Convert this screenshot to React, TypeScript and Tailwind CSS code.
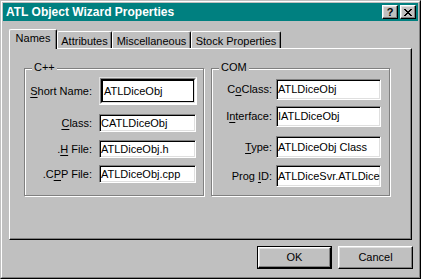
import React from 'react';

// Win95 style 3D edges
const raised =
  'border border-t-white border-l-white border-r-black border-b-black shadow-[inset_-1px_-1px_0_#808080,inset_1px_1px_0_#dfdfdf]';
const sunken =
  'border border-t-[#808080] border-l-[#808080] border-r-white border-b-white shadow-[inset_1px_1px_0_#000,inset_-1px_-1px_0_#dfdfdf]';

const Key: React.FC<{ children: React.ReactNode }> = ({ children }) => (
  <span className="underline underline-offset-[2px] decoration-1">{children}</span>
);

const CloseGlyph = () => {
  const rows = ['##....##', '.##..##.', '..####..', '...##...', '..####..', '.##..##.', '##....##'];
  return (
    <svg width="8" height="7" viewBox="0 0 8 7" shapeRendering="crispEdges">
      {rows.map((r, y) =>
        r.split('').map((c, x) => (c === '#' ? <rect key={`${x}-${y}`} x={x} y={y} width="1" height="1" fill="#000" /> : null))
      )}
    </svg>
  );
};

const Field: React.FC<{ value: string; w: string; h: string; mt: string; label: React.ReactNode; labelW: string; gap: string }> = ({
  value,
  w,
  h,
  mt,
  label,
  labelW,
  gap,
}) => (
  <div className={`flex items-center ${mt} ${gap}`}>
    <div className={`${labelW} text-right leading-none`}>{label}</div>
    <div className={`${w} ${h} bg-white ${sunken} flex items-center pl-[1px] overflow-hidden whitespace-nowrap leading-none`}>
      {value}
    </div>
  </div>
);

const Tab: React.FC<{ label: string; w: string; selected?: boolean }> = ({ label, w, selected }) =>
  selected ? (
    <div
      className={`${w} h-[20px] -mb-px bg-[#c0c0c0] border-l border-t border-r border-l-white border-t-white border-r-black rounded-t-[2px] shadow-[inset_-1px_0_0_#808080] flex items-start justify-center pt-[3px] leading-none`}
    >
      {label}
    </div>
  ) : (
    <div
      className={`${w} h-[17px] bg-[#c0c0c0] border-l border-t border-r border-l-white border-t-white border-r-black rounded-t-[2px] shadow-[inset_-1px_0_0_#808080] flex items-start justify-center pt-[4px] leading-none`}
    >
      {label}
    </div>
  );

export default function App() {
  return (
    <div className="w-[421px] h-[279px] bg-[#c0c0c0] border border-t-[#c0c0c0] border-l-[#c0c0c0] border-r-black border-b-black font-['Liberation_Sans',Arial,sans-serif] text-[11px] text-black">
      <div className="h-full border border-t-white border-l-white border-r-[#808080] border-b-[#808080] p-px flex flex-col">
        {/* Title bar */}
        <div className="h-[18px] bg-[#008080] flex items-center pl-[3px] pr-[2px]">
          <span className="text-white font-bold text-[12px] leading-none flex-1">ATL Object Wizard Properties</span>
          <div className="flex gap-[2px]">
            <div className={`w-[16px] h-[14px] bg-[#c0c0c0] ${raised} flex items-center justify-center font-bold text-[11px] leading-none`}>
              ?
            </div>
            <div className={`w-[16px] h-[14px] bg-[#c0c0c0] ${raised} flex items-center justify-center`}>
              <CloseGlyph />
            </div>
          </div>
        </div>

        {/* Tabs */}
        <div className="ml-[6px] mt-[8px] flex items-end h-[19px] relative z-10">
          <Tab label="Names" w="w-[48px]" selected />
          <Tab label="Attributes" w="w-[55px]" />
          <Tab label="Miscellaneous" w="w-[79px]" />
          <Tab label="Stock Properties" w="w-[90px]" />
        </div>

        {/* Page */}
        <div className="ml-[6px] w-[403px] h-[192px] border border-t-white border-l-white border-r-black border-b-black shadow-[inset_-1px_-1px_0_#808080] flex gap-[7px] pl-[14px] pt-[19px]">
          {/* C++ group */}
          <div className="relative w-[180px] h-[128px] border border-[#808080] shadow-[inset_1px_1px_0_#fff,1px_1px_0_#fff] flex flex-col">
            <span className="absolute -top-[7px] left-[7px] px-[2px] bg-[#c0c0c0] leading-none">C++</span>
            <div className="flex items-center gap-[7px] mt-[8px]">
              <div className="w-[67px] text-right leading-none">
                <Key>S</Key>hort Name:
              </div>
              <div className="w-[98px] h-[28px] border border-t-[#dfdfdf] border-l-[#dfdfdf] border-r-white border-b-white">
                <div className="h-full border border-t-[#808080] border-l-[#808080] border-r-white border-b-white">
                  <div className="h-full border border-t-black border-l-black border-r-[#dfdfdf] border-b-[#dfdfdf]">
                    <div className="h-full border border-black bg-white flex items-center pl-px leading-none">ATLDiceObj</div>
                  </div>
                </div>
              </div>
            </div>
            <Field mt="mt-[9px]" gap="gap-[7px]" labelW="w-[67px]" w="w-[97px]" h="h-[18px]" value="CATLDiceObj" label={<><Key>C</Key>lass:</>} />
            <Field mt="mt-[8px]" gap="gap-[7px]" labelW="w-[67px]" w="w-[97px]" h="h-[18px]" value="ATLDiceObj.h" label={<>.<Key>H</Key> File:</>} />
            <Field mt="mt-[7px]" gap="gap-[7px]" labelW="w-[67px]" w="w-[97px]" h="h-[18px]" value="ATLDiceObj.cpp" label={<>.C<Key>P</Key>P File:</>} />
          </div>

          {/* COM group */}
          <div className="relative w-[179px] h-[128px] border border-[#808080] shadow-[inset_1px_1px_0_#fff,1px_1px_0_#fff] flex flex-col">
            <span className="absolute -top-[7px] left-[7px] px-[2px] bg-[#c0c0c0] leading-none">COM</span>
            <Field mt="mt-[10px]" gap="gap-[4px]" labelW="w-[60px]" w="w-[105px]" h="h-[21px]" value="ATLDiceObj" label={<>C<Key>o</Key>Class:</>} />
            <Field mt="mt-[6px]" gap="gap-[4px]" labelW="w-[60px]" w="w-[105px]" h="h-[21px]" value="IATLDiceObj" label={<>I<Key>n</Key>terface:</>} />
            <Field mt="mt-[9px]" gap="gap-[4px]" labelW="w-[60px]" w="w-[105px]" h="h-[22px]" value="ATLDiceObj Class" label={<><Key>T</Key>ype:</>} />
            <Field mt="mt-[7px]" gap="gap-[4px]" labelW="w-[60px]" w="w-[105px]" h="h-[22px]" value="ATLDiceSvr.ATLDiceObj.1" label={<>Prog <Key>I</Key>D:</>} />
          </div>
        </div>

        {/* Buttons */}
        <div className="flex justify-end gap-[6px] mt-[6px] mr-[5px]">
          <div className="w-[75px] h-[23px] border border-black">
            <div className={`h-full ${raised} flex items-center justify-center leading-none`}>OK</div>
          </div>
          <div className={`w-[75px] h-[23px] ${raised} flex items-center justify-center leading-none`}>Cancel</div>
        </div>
      </div>
    </div>
  );
}
